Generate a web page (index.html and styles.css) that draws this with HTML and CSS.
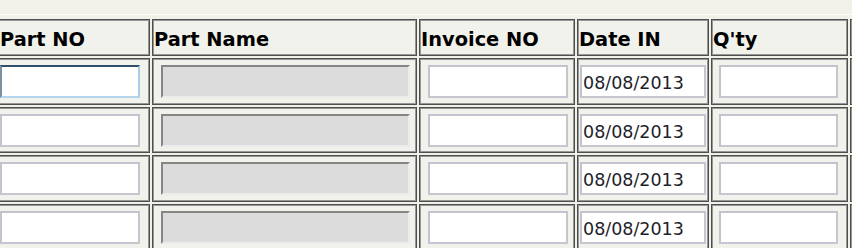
FILE: index.html
```html
<!DOCTYPE html>
<html>
<head>
<meta charset="utf-8">
<link rel="stylesheet" href="styles.css">
</head>
<body>
<table class="grid">
  <thead>
    <tr>
      <th class="c-no">Part NO</th>
      <th class="c-name">Part Name</th>
      <th class="c-inv">Invoice NO</th>
      <th class="c-date">Date IN</th>
      <th class="c-qty">Q'ty</th>
      <th class="c-more"></th>
    </tr>
  </thead>
  <tbody>
    <tr>
      <td class="c-no"><input class="field w-no focused" type="text"></td>
      <td class="c-name"><input class="field w-name locked" type="text" readonly></td>
      <td class="c-inv"><input class="field w-inv" type="text"></td>
      <td class="c-date"><input class="field w-date" type="text" value="08/08/2013"></td>
      <td class="c-qty"><input class="field w-qty" type="text"></td>
      <td class="c-more"></td>
    </tr>
    <tr>
      <td class="c-no"><input class="field w-no" type="text"></td>
      <td class="c-name"><input class="field w-name locked" type="text" readonly></td>
      <td class="c-inv"><input class="field w-inv" type="text"></td>
      <td class="c-date"><input class="field w-date" type="text" value="08/08/2013"></td>
      <td class="c-qty"><input class="field w-qty" type="text"></td>
      <td class="c-more"></td>
    </tr>
    <tr>
      <td class="c-no"><input class="field w-no" type="text"></td>
      <td class="c-name"><input class="field w-name locked" type="text" readonly></td>
      <td class="c-inv"><input class="field w-inv" type="text"></td>
      <td class="c-date"><input class="field w-date" type="text" value="08/08/2013"></td>
      <td class="c-qty"><input class="field w-qty" type="text"></td>
      <td class="c-more"></td>
    </tr>
    <tr>
      <td class="c-no"><input class="field w-no" type="text"></td>
      <td class="c-name"><input class="field w-name locked" type="text" readonly></td>
      <td class="c-inv"><input class="field w-inv" type="text"></td>
      <td class="c-date"><input class="field w-date" type="text" value="08/08/2013"></td>
      <td class="c-qty"><input class="field w-qty" type="text"></td>
      <td class="c-more"></td>
    </tr>
  </tbody>
</table>
</body>
</html>
```

FILE: styles.css
```css
html, body {
  margin: 0;
  padding: 0;
  overflow: hidden;
  background: #f1f1ea;
}

.grid {
  box-sizing: border-box;
  width: 980px;
  margin: 14px 0 0 -7px;
  table-layout: fixed;
  border-collapse: separate;
  border-spacing: 2px;
  border: 1px solid;
  border-color: #fdfdfb #a0a09a #a0a09a #fdfdfb;
  padding-top: 2px;
  font-family: "DejaVu Sans", Verdana, sans-serif;
  background: #f1f1ea;
}

.grid th,
.grid td {
  box-sizing: border-box;
  border: 1px solid #4e4e4e;
  box-shadow: inset 0 0 0 1px #979797;
  background: #f2f2ec;
}

.grid th {
  height: 37px;
  padding: 4px 1px 0 1px;
  text-align: left;
  vertical-align: middle;
  font-size: 19.4px;
  font-weight: bold;
  color: #000;
  white-space: nowrap;
  overflow: hidden;
}

.grid th.c-no { padding-left: 3px; }

.grid td {
  padding: 6px 0 5.67px 8px;
  vertical-align: top;
}

.c-no { width: 154px; }
.c-name { width: 265px; }
.c-inv { width: 156px; }
.c-date { width: 132px; }
.c-qty { width: 137px; }
.c-more { width: 120px; }

.grid td.c-no { padding-left: 3px; }
.grid td.c-name { padding-left: 8px; }
.grid td.c-inv { padding-left: 8px; }
.grid td.c-date { padding-left: 2px; }
.grid td.c-qty { padding-left: 7px; }

.field {
  box-sizing: border-box;
  display: block;
  height: 33px;
  margin: 0;
  padding: 3px 1px 0 1px;
  border: 2px solid;
  border-color: #c3c3cd #c6c6d0 #c6c6d0 #c3c3cd;
  background: #fff;
  font-family: "DejaVu Sans", Verdana, sans-serif;
  font-size: 17.5px;
  color: #1e1e2a;
  outline: none;
}

.w-no { width: 140px; }
.w-name { width: 249px; }
.w-inv { width: 140px; }
.w-date { width: 126px; }
.w-qty { width: 119px; }

.field.focused {
  border-color: #2f4f6d #a9cde8 #b6d6ee #7d909f;
}

.field.locked {
  background: #dcdcdc;
  border-color: #868686 #ececec #ececec #868686;
}
```
